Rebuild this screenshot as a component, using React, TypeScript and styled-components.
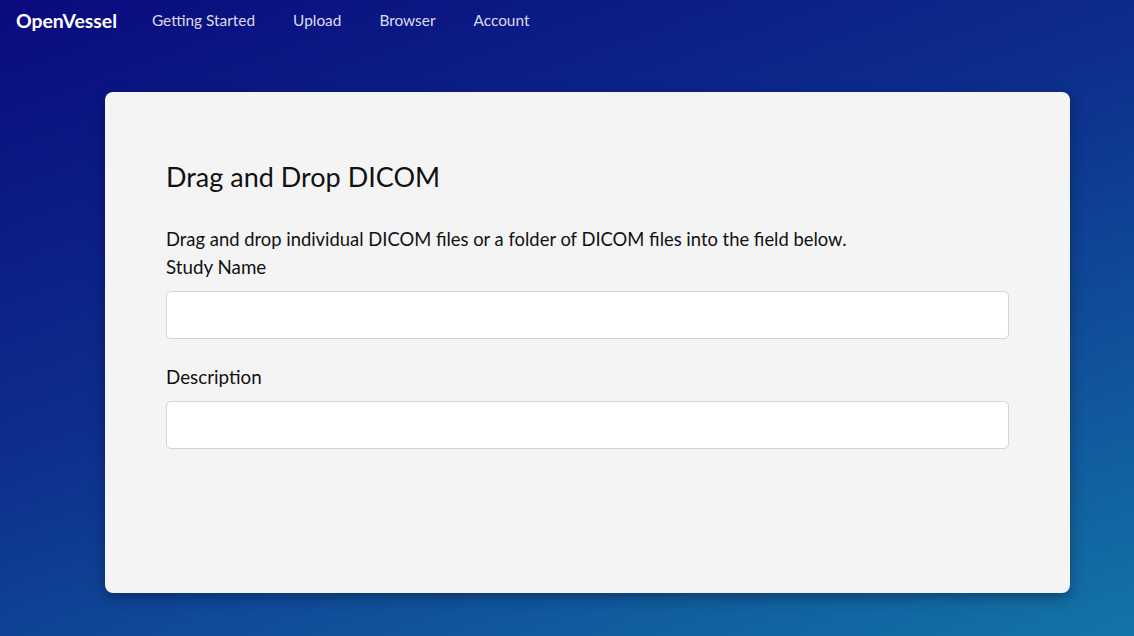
import React from 'react';
import styled, { createGlobalStyle } from 'styled-components';

const GlobalStyle = createGlobalStyle`
  html, body {
    margin: 0;
    padding: 0;
    height: 100%;
  }
  body {
    font-family: Lato, "Noto Sans", "Liberation Sans", sans-serif;
    background: linear-gradient(160deg, #0a0a7e 0%, #0d2f8e 45%, #1374a6 100%);
    min-height: 636px;
  }
`;

const Page = styled.div`
  min-height: 636px;
  display: flex;
  flex-direction: column;
`;

const NavBar = styled.nav`
  height: 40px;
  display: flex;
  align-items: center;
  padding: 0 16px;
`;

const Brand = styled.a`
  color: #ffffff;
  font-weight: 700;
  font-size: 19.4px;
  margin-right: 16px;
  text-decoration: none;
`;

const NavLink = styled.a`
  color: #dcdcec;
  font-size: 15.4px;
  padding: 0 19px;
  text-decoration: none;
`;

const Main = styled.main`
  padding: 52px 0 0 105px;
`;

const Card = styled.section`
  width: 965px;
  height: 501px;
  box-sizing: border-box;
  background: #f4f4f4;
  border-radius: 8px;
  box-shadow: 0 4px 14px rgba(0, 0, 30, 0.35);
  padding: 67px 61px 0 61px;
`;

const Heading = styled.h2`
  margin: 0 0 31px 0;
  font-size: 27px;
  font-weight: 400;
  color: #111;
  line-height: 1.3;
`;

const Intro = styled.p`
  margin: 0;
  font-size: 18.4px;
  line-height: 28px;
  color: #111;
`;

const Field = styled.div`
  display: flex;
  flex-direction: column;
  margin-bottom: 24px;
`;

const Label = styled.label`
  font-size: 18.8px;
  line-height: 28px;
  color: #111;
  margin-bottom: 10px;
`;

const Input = styled.input`
  height: 48px;
  box-sizing: border-box;
  border: 1px solid #d2d4d9;
  border-radius: 5px;
  background: #ffffff;
  padding: 0 12px;
  font-size: 16px;
  font-family: inherit;
`;

const links = ['Getting Started', 'Upload', 'Browser', 'Account'];

export default function App() {
  return (
    <Page>
      <GlobalStyle />
      <NavBar>
        <Brand href="#">OpenVessel</Brand>
        {links.map((l) => (
          <NavLink key={l} href="#">
            {l}
          </NavLink>
        ))}
      </NavBar>
      <Main>
        <Card>
          <Heading>Drag and Drop DICOM</Heading>
          <Intro>Drag and drop individual DICOM files or a folder of DICOM files into the field below.</Intro>
          <Field>
            <Label>Study Name</Label>
            <Input type="text" />
          </Field>
          <Field>
            <Label>Description</Label>
            <Input type="text" />
          </Field>
        </Card>
      </Main>
    </Page>
  );
}
